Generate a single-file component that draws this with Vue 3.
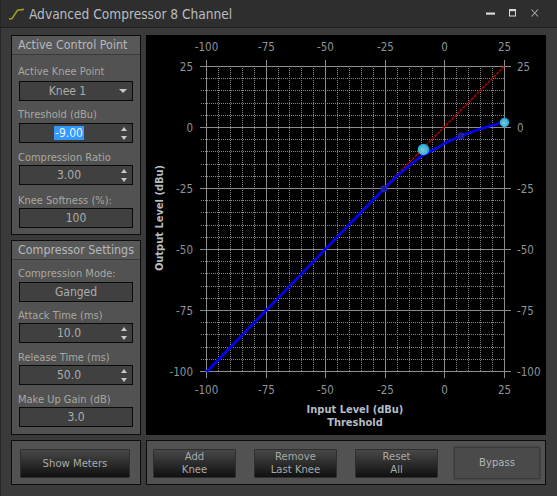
<template>
  <div class="window">
    <header class="titlebar">
      <svg class="logo" width="18" height="14" viewBox="0 0 18 14">
        <path d="M1 12 L4 11.6 L9.5 3.2 L16 2.4" fill="none" stroke="#a0a01e" stroke-width="1.6" />
      </svg>
      <span class="title">Advanced Compressor 8 Channel</span>
      <div class="win-controls">
        <svg width="60" height="14" viewBox="0 0 60 14">
          <rect x="0" y="5.5" width="9" height="2.2" fill="#d8d8d8" />
          <rect x="23.5" y="2.5" width="6" height="6.5" fill="none" stroke="#d8d8d8" stroke-width="1" />
          <rect x="23" y="2" width="7" height="2.2" fill="#d8d8d8" />
          <path d="M45.5 2.5 L52 9.5 M52 2.5 L45.5 9.5" stroke="#a8a8a8" stroke-width="1.1" />
        </svg>
      </div>
    </header>

    <main class="content">
      <aside class="side">
        <section class="panel panel-knee">
          <h2 class="panel-title">Active Control Point</h2>
          <div class="rows">
            <div class="row">
              <label>Active Knee Point</label>
              <div class="field spin">
                <span class="val knee-val">Knee 1</span>
                <i class="tri-down big"></i>
              </div>
            </div>
            <div class="row">
              <label>Threshold (dBu)</label>
              <div class="field spin">
                <span class="val"><span class="selected">-9.00</span></span>
                <span class="arrows"><i class="tri-up"></i><i class="tri-down"></i></span>
              </div>
            </div>
            <div class="row">
              <label>Compression Ratio</label>
              <div class="field spin">
                <span class="val">3.00</span>
                <span class="arrows"><i class="tri-up"></i><i class="tri-down"></i></span>
              </div>
            </div>
            <div class="row">
              <label>Knee Softness (%):</label>
              <div class="field"><span class="val">100</span></div>
            </div>
          </div>
        </section>

        <section class="panel panel-settings">
          <h2 class="panel-title">Compressor Settings</h2>
          <div class="rows">
            <div v-for="s in settings" :key="s.label" class="row">
              <label>{{ s.label }}</label>
              <div class="field" :class="{ spin: s.spin }">
                <span class="val">{{ s.value }}</span>
                <span v-if="s.spin" class="arrows"><i class="tri-up"></i><i class="tri-down"></i></span>
              </div>
            </div>
          </div>
        </section>
      </aside>

      <section class="plot">
        <svg width="400" height="400" viewBox="146 35 400 400">
          <!-- minor grid -->
          <line v-for="x in minorX" :key="'mx' + x" :x1="x" y1="66" :x2="x" y2="372" class="minor" />
          <line v-for="y in minorY" :key="'my' + y" x1="201" :y1="y" x2="505" :y2="y" class="minor" />
          <!-- major grid -->
          <line v-for="t in ticks" :key="'vx' + t" :x1="sx(t)" y1="60" :x2="sx(t)" y2="378" class="major" />
          <line v-for="t in ticks" :key="'hy' + t" x1="200" :y1="sy(t)" x2="511" :y2="sy(t)" class="major" />

          <line x1="384" y1="188" x2="504.5" y2="66" class="unity" />
          <polyline :points="curve" class="curve" />

          <circle cx="384" cy="189" r="3.4" fill="url(#dot)" />
          <circle cx="461" cy="136" r="3.4" fill="url(#dot)" />
          <circle cx="423.5" cy="149.5" r="5.8" fill="url(#active)" />
          <circle cx="504.5" cy="122.5" r="4.7" fill="url(#active)" />

          <defs>
            <radialGradient id="dot">
              <stop offset="0" stop-color="#1c1c78" />
              <stop offset="1" stop-color="#2222c4" />
            </radialGradient>
            <radialGradient id="active" cx="0.45" cy="0.55">
              <stop offset="0" stop-color="#7fc8d8" />
              <stop offset="0.75" stop-color="#3fb4d4" />
              <stop offset="1" stop-color="#12a8e0" />
            </radialGradient>
          </defs>

          <text v-for="t in ticks" :key="'t' + t" :x="sx(t)" y="51" text-anchor="middle" class="tick">{{ t }}</text>
          <text v-for="t in ticks" :key="'b' + t" :x="sx(t)" y="394" text-anchor="middle" class="tick">{{ t }}</text>
          <text v-for="t in ticks" :key="'l' + t" x="193" :y="sy(t) + 4" text-anchor="end" class="tick">{{ t }}</text>
          <text v-for="t in ticks" :key="'r' + t" x="517" :y="sy(t) + 4" class="tick">{{ t }}</text>

          <text x="355" y="413" text-anchor="middle" class="axis">Input Level (dBu)</text>
          <text x="355" y="426" text-anchor="middle" class="axis">Threshold</text>
          <text transform="translate(163 218) rotate(-90)" text-anchor="middle" class="axis">Output Level (dBu)</text>
        </svg>
      </section>
    </main>

    <footer class="bottom">
      <div class="panel bottom-left">
        <button class="btn meters">Show Meters</button>
      </div>
      <div class="panel bottom-right">
        <button class="btn knee-btn"><span>Add</span><span>Knee</span></button>
        <button class="btn knee-btn"><span>Remove</span><span>Last Knee</span></button>
        <button class="btn knee-btn"><span>Reset</span><span>All</span></button>
        <button class="btn bypass">Bypass</button>
      </div>
    </footer>
  </div>
</template>

<script setup>
const settings = [
  { label: "Compression Mode:", value: "Ganged", spin: false },
  { label: "Attack Time (ms)", value: "10.0", spin: true },
  { label: "Release Time (ms)", value: "50.0", spin: true },
  { label: "Make Up Gain (dB)", value: "3.0", spin: false },
];

const ticks = [-100, -75, -50, -25, 0, 25];

// dBu -> pixel, snapped so the 1px lines stay crisp
const sx = v => Math.round(206 + (v + 100) * 2.384) + 0.5;
const sy = v => Math.round(66 + (25 - v) * 2.44) + 0.5;

const minorX = [];
const minorY = [];
for (let v = -95; v < 25; v += 5) {
  if (v % 25 !== 0) {
    minorX.push(sx(v));
    minorY.push(sy(v));
  }
}

const curve =
  "206.5,372 374,199 384,189 397,176 415,161 423,155 437,148 445,143 461,136 480,129 504,122";
</script>

<style>
html,
body {
  margin: 0;
  background: #3a3a3a;
}
</style>

<style scoped>
.window {
  width: 557px;
  height: 496px;
  display: flex;
  flex-direction: column;
  overflow: hidden;
  background: #3a3a3a;
  font-family: "DejaVu Sans Condensed", "DejaVu Sans", sans-serif;
  font-stretch: condensed;
  color: #acacac;
  box-sizing: border-box;
  border-left: 1px solid #262626;
}

.titlebar {
  height: 28px;
  box-sizing: border-box;
  flex: none;
  display: flex;
  align-items: center;
  padding: 0 11px 0 7px;
  background: #2e2e2e;
  border-bottom: 1px solid #1e1e1e;
}

.logo {
  margin-right: 3px;
}

.title {
  font-size: 13.6px;
  color: #b8bcc0;
}

.win-controls {
  margin-left: auto;
  display: flex;
}

.content {
  display: flex;
  gap: 5px;
  padding: 7px 10px 0 10px;
}

.side {
  width: 130px;
  display: flex;
  flex-direction: column;
  gap: 5px;
}

.panel {
  box-sizing: border-box;
  background: #525252;
  border: 1px solid #0c0c0c;
}

.panel-knee {
  height: 200px;
}

.panel-settings {
  height: 195px;
}

.panel-title {
  margin: 0;
  height: 19px;
  line-height: 18px;
  box-sizing: border-box;
  padding-left: 6px;
  font-size: 12.4px;
  font-weight: 400;
  white-space: nowrap;
  color: #b4b8bc;
  background: #585858;
  border-bottom: 1px solid #3a3a3a;
}

.rows {
  padding: 0 7px;
  display: flex;
  flex-direction: column;
}

.panel-knee .rows {
  padding-top: 4px;
}

.panel-settings .rows {
  padding-top: 1px;
}

.row {
  height: 42px;
  display: flex;
  flex-direction: column;
  justify-content: flex-end;
}

.panel-knee .row:last-child {
  height: 43px;
}

.panel-settings .row:nth-child(-n + 2) {
  height: 41px;
}

.row label {
  font-size: 11px;
  line-height: 14px;
  margin: 0 0 1px -1px;
  color: #a8a8a0;
}

.panel-knee .row:first-child label {
  margin-bottom: 2px;
}

.panel-knee .row:nth-child(n + 3) label,
.panel-settings .row:nth-child(n + 2) label {
  margin-bottom: 0;
}

.field {
  height: 20px;
  box-sizing: border-box;
  flex: none;
  display: flex;
  align-items: center;
  background: #404040;
  border: 1px solid #0a0a0a;
  font-size: 12px;
}

.val {
  flex: 1;
  text-align: center;
}

.spin .val {
  padding-right: 14px;
}

.spin .knee-val {
  padding-right: 20px;
}

.selected {
  background: #3399ff;
  color: #e8f2ff;
  padding: 0 1px;
}

.arrows {
  width: 16px;
  margin-left: -16px;
  display: flex;
  flex-direction: column;
  align-items: center;
  gap: 5px;
}

.tri-up,
.tri-down {
  display: block;
  width: 0;
  height: 0;
  border-left: 3px solid transparent;
  border-right: 3px solid transparent;
}

.tri-up {
  border-bottom: 4px solid #c8c8c8;
}

.tri-down {
  border-top: 4px solid #c8c8c8;
}

.tri-down.big {
  margin-right: 5px;
  margin-left: -16px;
  border-left-width: 4px;
  border-right-width: 4px;
}

.plot {
  width: 400px;
  height: 400px;
  background: #000;
  flex: none;
}

.plot svg {
  display: block;
}

.minor {
  stroke: #868686;
  stroke-width: 1;
  stroke-dasharray: 1 1;
}

.major {
  stroke: #8c8c8c;
  stroke-width: 1;
}

.unity {
  stroke: #b80000;
  stroke-width: 1.5;
  stroke-dasharray: 3 1;
}

.curve {
  fill: none;
  stroke: #0000ff;
  stroke-width: 2.6;
  stroke-linejoin: round;
}

.tick {
  font-size: 11.5px;
  fill: #8c939a;
}

.axis {
  font-size: 11px;
  font-weight: 700;
  fill: #b4bcc4;
}

.bottom {
  display: flex;
  gap: 5px;
  padding: 5px 10px 0 10px;
}

.bottom-left {
  width: 130px;
  height: 45px;
  display: flex;
  align-items: center;
  padding-left: 8px;
}

.bottom-right {
  width: 400px;
  height: 45px;
  display: flex;
  align-items: center;
  padding-left: 6px;
}

.btn {
  box-sizing: border-box;
  font-family: inherit;
  font-stretch: inherit;
  font-size: 11.2px;
  line-height: 13px;
  color: #a8a8a8;
  padding: 0;
  border: 1px solid #2e2e2e;
  border-radius: 1px;
  background: linear-gradient(#484848, #101010);
  box-shadow: 0 0 1px #666;
}

.btn span {
  display: block;
}

.meters {
  width: 110px;
  height: 29px;
  margin-top: 1px;
}

.knee-btn {
  width: 83px;
  height: 29px;
  margin-top: 1px;
  margin-right: 18px;
}

.bypass {
  width: 86px;
  height: 32px;
  margin-left: -2px;
  color: #b4b4b4;
  background: #4a4a4a;
  border-color: #3a3a3a;
  box-shadow: 0 0 2px #2a2a2a;
}
</style>
